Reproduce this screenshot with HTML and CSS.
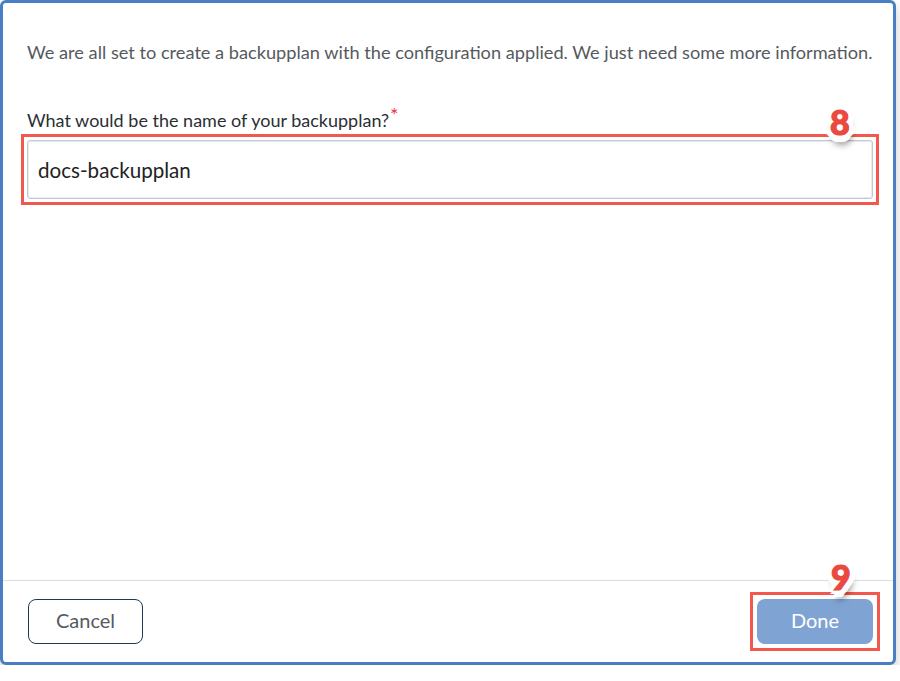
FILE: index.html
```html
<!DOCTYPE html>
<html>
<head>
<meta charset="utf-8">
<link rel="stylesheet" href="styles.css">
</head>
<body>
<div class="dialog">
  <div class="content">
    <p class="intro">We are all set to create a backupplan with the configuration applied. We just need some more information.</p>
    <label class="label" for="name">What would be the name of your backupplan?<span class="req">*</span></label>
    <div class="field hl">
      <input id="name" class="input" type="text" value="docs-backupplan">
      <span class="badge badge-8">8</span>
    </div>
  </div>
  <div class="footer">
    <button class="btn btn-cancel">Cancel</button>
    <div class="done-wrap hl">
      <button class="btn btn-done">Done</button>
      <span class="badge badge-9">9</span>
    </div>
  </div>
</div>
</body>
</html>
```
FILE: styles.css
```css
html, body {
  margin: 0;
  padding: 0;
  background: #ffffff;
  font-family: Lato, "Open Sans", "Liberation Sans", sans-serif;
}
.dialog {
  width: 896px;
  height: 665px;
  box-sizing: border-box;
  border: 3px solid #4a7dc1;
  border-radius: 6px;
  box-shadow: 0 5px 12px rgba(0, 0, 0, 0.22);
  display: flex;
  flex-direction: column;
  background: #fff;
}
.content {
  flex: 1;
  padding: 39px 20px 0 24px;
  display: flex;
  flex-direction: column;
}
.intro {
  margin: 0;
  font-size: 18.2px;
  line-height: 20px;
  color: #555a60;
}
.label {
  display: block;
  margin-top: 48px;
  height: 20px;
  font-size: 18px;
  line-height: 20px;
  color: #2b2f33;
}
.req {
  color: #e2383a;
  font-size: 20px;
  line-height: 0;
  position: relative;
  top: -5px;
  margin-left: 1px;
}
.hl {
  position: relative;
  border: 3px solid #f2584e;
}
.field {
  margin: 4px -6px 0 -6px;
  padding: 3px;
}
.input {
  display: block;
  width: 846px;
  height: 59px;
  box-sizing: border-box;
  border: 1px solid #c4c9d0;
  box-shadow: inset 0 0 0 1px #e8ebef;
  border-radius: 3px;
  padding: 0 10px;
  font-family: inherit;
  font-size: 20.6px;
  color: #222;
  outline: none;
}
.badge {
  position: absolute;
  font-family: Lato, "Liberation Sans", sans-serif;
  font-weight: 900;
  font-size: 34px;
  line-height: 36px;
  color: #ea4940;
  -webkit-text-stroke: 1.2px #ea4940;
  text-shadow:
    3px 0 0 #fff, -3px 0 0 #fff, 0 3px 0 #fff, 0 -3px 0 #fff,
    2px 2px 0 #fff, -2px 2px 0 #fff, 2px -2px 0 #fff, -2px -2px 0 #fff,
    5px 0 0 #fff, -5px 0 0 #fff, 0 5px 0 #fff, 0 -5px 0 #fff,
    4px 4px 0 #fff, -4px 4px 0 #fff, 4px -4px 0 #fff, -4px -4px 0 #fff,
    6px 2px 0 #fff, -6px 2px 0 #fff, 2px 7px 0 #fff, -2px 7px 0 #fff,
    2px 9px 7px rgba(0, 0, 0, 0.6);
}
.badge-8 {
  left: 806px;
  top: -33px;
}
.footer {
  border-top: 1px solid #d9dde3;
  padding: 18px 20px 18px 25px;
  display: flex;
  justify-content: space-between;
  align-items: center;
}
.btn {
  font-family: inherit;
  font-size: 20px;
  line-height: 20px;
  height: 45px;
  padding: 0 0 3px;
  border-radius: 8px;
  cursor: pointer;
  display: block;
}
.btn-cancel {
  width: 115px;
  background: #fff;
  border: 1.5px solid #1e3a56;
  color: #555a60;
}
.done-wrap {
  margin: -7px -7px -7px 0;
  padding: 4px;
}
.btn-done {
  width: 116px;
  background: #7fa4d4;
  border: none;
  color: #fff;
}
.badge-9 {
  left: 78px;
  top: -36px;
}
```
